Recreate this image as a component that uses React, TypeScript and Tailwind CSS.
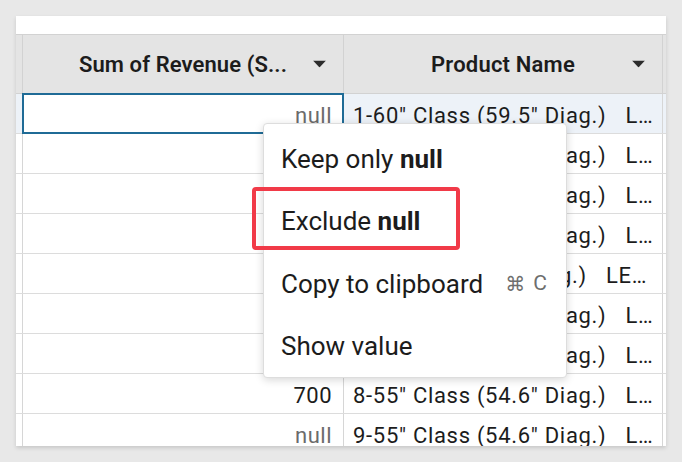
const font = { fontFamily: '"Roboto", "Liberation Sans", sans-serif' };

type Row = { value: string; isNull: boolean; product: string; tail: string };

const rows: Row[] = [
  { value: "null", isNull: true, product: '1-60" Class (59.5" Diag.)', tail: "LED TV" },
  { value: "1,200", isNull: false, product: '2-55" Class (54.6" Diag.)', tail: "LED TV" },
  { value: "900", isNull: false, product: '3-55" Class (54.6" Diag.)', tail: "LED TV" },
  { value: "null", isNull: true, product: '4-55" Class (54.6" Diag.)', tail: "LED TV" },
  { value: "650", isNull: false, product: '5-50" Class (49" Diag.)', tail: "LED TV" },
  { value: "null", isNull: true, product: '6-55" Class (54.6" Diag.)', tail: "LED TV" },
  { value: "800", isNull: false, product: '7-55" Class (54.6" Diag.)', tail: "LED TV" },
  { value: "700", isNull: false, product: '8-55" Class (54.6" Diag.)', tail: "LED TV" },
  { value: "null", isNull: true, product: '9-55" Class (54.6" Diag.)', tail: "LED TV" },
];

function Caret() {
  return (
    <svg width="13" height="7" viewBox="0 0 13 7" className="absolute right-[17px] top-1/2 -translate-y-1/2">
      <path d="M0 0h13L6.5 7z" fill="#2b2b2b" />
    </svg>
  );
}

function HeaderRow() {
  return (
    <div className="flex h-[60px] shrink-0 border-y border-[#d2d2d2] bg-[#e4e4e4]">
      <div className="w-[7px] shrink-0 border-r border-[#d2d2d2]" />
      <div className="relative flex w-[321px] shrink-0 items-center justify-center border-r border-[#d2d2d2]">
        <span className="text-[22px] font-semibold tracking-[0.1px] text-[#1c1c1c]">Sum of Revenue (S...</span>
        <Caret />
      </div>
      <div className="relative flex w-[319px] shrink-0 items-center justify-center border-r border-[#d2d2d2]">
        <span className="text-[22px] font-semibold tracking-[0.2px] text-[#1c1c1c]">Product Name</span>
        <Caret />
      </div>
      <div className="flex-1" />
    </div>
  );
}

function DataRow({ row, selected }: { row: Row; selected: boolean }) {
  return (
    <div className={`flex h-[40px] shrink-0 border-b border-[#dcdcdc] ${selected ? "bg-[#edf2f8]" : "bg-white"}`}>
      <div className="w-[7px] shrink-0 border-r border-[#d6d6d6]" />
      <div className="relative flex w-[321px] shrink-0 items-center justify-end border-r border-[#d6d6d6] bg-white pr-[11px] pt-[4px]">
        <span className={`text-[22px] tracking-[0.5px] ${row.isNull ? "text-[#6b6b6b]" : "text-[#1c1c1c]"}`}>{row.value}</span>
        {selected && <div className="absolute -left-px -top-px right-[-1px] bottom-[-1px] border-2 border-[#1f6b96]" />}
      </div>
      <div className="flex w-[319px] shrink-0 items-center border-r border-[#d6d6d6] pl-[9px] pr-[6px] pt-[4px] text-[22px] tracking-[0.7px] text-[#1c1c1c]">
        <span className="shrink-0 whitespace-nowrap">{row.product}</span>
        <span className="ml-[19px] min-w-0 flex-1 truncate">{row.tail}</span>
      </div>
      <div className="flex-1" />
    </div>
  );
}

function Menu() {
  return (
    <div className="absolute left-[263px] top-[123px] w-[304px] rounded-[4px] border border-[#dddddd] bg-white pb-[1px] pt-[4px] text-[26px] text-[#1c1c1c] shadow-[0_2px_8px_rgba(0,0,0,0.16)]">
      <div className="flex h-[62px] items-center px-[17px]">
        Keep only&nbsp;<b className="font-bold">null</b>
      </div>
      <div className="flex h-[62px] items-center px-[17px]">
        Exclude&nbsp;<b className="font-bold">null</b>
      </div>
      <div className="flex h-[62px] items-center px-[17px] pt-[2px]">
        <span>Copy to clipboard</span>
        <span className="ml-auto flex items-center gap-[8px] pr-[2px] text-[21px] text-[#6e6e6e]">
          <span style={{ fontFamily: '"DejaVu Sans", sans-serif' }} className="text-[20px]">⌘</span>
          <span>C</span>
        </span>
      </div>
      <div className="flex h-[62px] items-center px-[17px] pt-[2px]">Show value</div>
    </div>
  );
}

export default function App() {
  return (
    <div className="relative h-[462px] w-[682px] overflow-hidden bg-[#e8e8e8] p-4" style={font}>
      <div className="flex h-[430px] w-[650px] flex-col overflow-hidden bg-white shadow-[0_2px_4px_rgba(0,0,0,0.14)]">
        <div className="h-[18px] shrink-0" />
        <HeaderRow />
        {rows.map((row, i) => (
          <DataRow key={i} row={row} selected={i === 0} />
        ))}
      </div>
      <Menu />
      <div className="absolute left-[252px] top-[187px] h-[63px] w-[208px] rounded-[4px] border-[4px] border-[#f13a48]" />
    </div>
  );
}
